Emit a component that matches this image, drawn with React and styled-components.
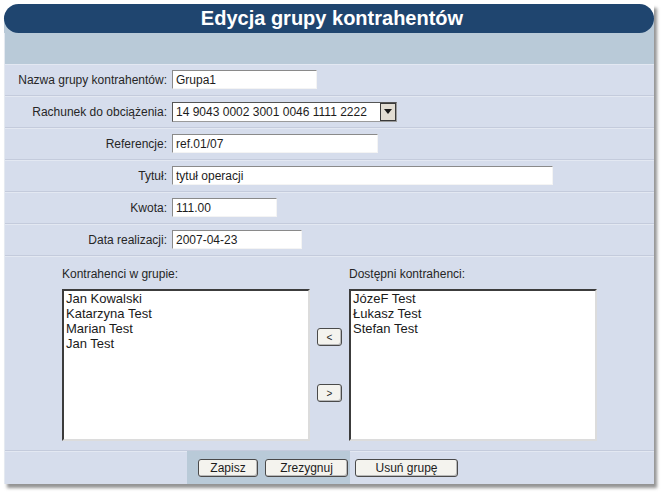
import styled, { createGlobalStyle } from 'styled-components'

const GlobalStyle = createGlobalStyle`
  html, body {
    margin: 0;
    padding: 0;
    background: #ffffff;
  }
  body {
    font-family: "Liberation Sans", Arial, sans-serif;
    font-size: 12px;
    color: #1c1c1c;
  }
`

const fields = [
  { label: 'Nazwa grupy kontrahentów:', value: 'Grupa1', width: 145 },
  { label: 'Rachunek do obciążenia:', value: '14 9043 0002 3001 0046 1111 2222', width: 225, select: true },
  { label: 'Referencje:', value: 'ref.01/07', width: 206 },
  { label: 'Tytuł:', value: 'tytuł operacji', width: 381 },
  { label: 'Kwota:', value: '111.00', width: 105 },
  { label: 'Data realizacji:', value: '2007-04-23', width: 130 },
]

const inGroup = ['Jan Kowalski', 'Katarzyna Test', 'Marian Test', 'Jan Test']
const available = ['JózeF Test', 'Łukasz Test', 'Stefan Test']

const App = () => {
  return (
    <>
      <GlobalStyle />
      <Page>
        <Panel>
          <Header>
            <TitleBar>
              <Title>Edycja grupy kontrahentów</Title>
            </TitleBar>
          </Header>
          <Band />
          {fields.map((f) => (
            <FormRow key={f.label}>
              <Label>{f.label}</Label>
              {f.select ? (
                <SelectBox $width={f.width}>
                  <SelectText>{f.value}</SelectText>
                  <ArrowButton>
                    <svg width="8" height="5" viewBox="0 0 8 5">
                      <path d="M0 0 L8 0 L4 5 Z" fill="#1a1a1a" />
                    </svg>
                  </ArrowButton>
                </SelectBox>
              ) : (
                <TextInput $width={f.width} defaultValue={f.value} />
              )}
            </FormRow>
          ))}
          <ListsSection>
            <ListColumn>
              <ListLabel>Kontrahenci w grupie:</ListLabel>
              <ListBox>
                {inGroup.map((n) => (
                  <ListItem key={n}>{n}</ListItem>
                ))}
              </ListBox>
            </ListColumn>
            <MoveColumn>
              <SmallButton>&lt;</SmallButton>
              <SmallButton>&gt;</SmallButton>
            </MoveColumn>
            <ListColumn>
              <ListLabel>Dostępni kontrahenci:</ListLabel>
              <ListBox>
                {available.map((n) => (
                  <ListItem key={n}>{n}</ListItem>
                ))}
              </ListBox>
            </ListColumn>
          </ListsSection>
          <ButtonBar>
            <ButtonCell>
              <Button $width={60}>Zapisz</Button>
              <Button $width={83}>Zrezygnuj</Button>
            </ButtonCell>
            <Button $width={103}>Usuń grupę</Button>
          </ButtonBar>
        </Panel>
      </Page>
    </>
  )
}

const Page = styled.div`
  width: 666px;
  height: 498px;
  padding: 4px 0 0 4px;
  box-sizing: border-box;
`

const Panel = styled.div`
  width: 650px;
  height: 480px;
  background: #d6ddec;
  border-left: 1px solid #e4e9f0;
  box-sizing: border-box;
  box-shadow: 3px 4px 3px rgba(60, 60, 60, 0.55);
  display: flex;
  flex-direction: column;
`

const Header = styled.div`
  background: linear-gradient(to bottom, #ffffff 50%, #b9cad8 50%);
  margin-left: -1px;
`

const TitleBar = styled.div`
  height: 29px;
  background: #1f456f;
  border-radius: 15px;
  display: flex;
  align-items: center;
  justify-content: center;
`

const Title = styled.span`
  font-family: "Liberation Sans Narrow", "Arial Narrow", "Liberation Sans", sans-serif;
  font-weight: bold;
  font-size: 20px;
  color: #ffffff;
  margin-left: 6px;
`

const Band = styled.div`
  height: 31px;
  background: #b9cad8;
`

const FormRow = styled.div`
  height: 32px;
  display: flex;
  align-items: center;
  border-bottom: 1px solid #c4cbdc;
  box-shadow: inset 0 1px 0 #e3e8f2;
  box-sizing: border-box;
`

const Label = styled.div`
  width: 162px;
  padding-right: 5px;
  text-align: right;
  flex-shrink: 0;
  color: #262626;
`

const TextInput = styled.input`
  width: ${(p) => p.$width}px;
  height: 19px;
  box-sizing: border-box;
  border: 1px solid;
  border-color: #8a8a8a #f4f4f4 #f4f4f4 #8a8a8a;
  background: #ffffff;
  font-family: "Liberation Sans", Arial, sans-serif;
  font-size: 12px;
  color: #1c1c1c;
  padding: 0 3px;
  margin: 0;
  outline: none;
`

const SelectBox = styled.div`
  width: ${(p) => p.$width}px;
  height: 20px;
  box-sizing: border-box;
  border: 1px solid;
  border-color: #555555 #9a9a9a #9a9a9a #555555;
  background: #ffffff;
  display: flex;
  align-items: center;
  justify-content: space-between;
  padding-left: 3px;
`

const SelectText = styled.span`
  font-size: 12px;
  white-space: nowrap;
`

const ArrowButton = styled.span`
  width: 16px;
  height: 18px;
  background: #e2ddd3;
  border: 1px solid #3a3a3a;
  box-sizing: border-box;
  display: flex;
  align-items: center;
  justify-content: center;
`

const ListsSection = styled.div`
  height: 195px;
  display: flex;
  padding-left: 57px;
  padding-top: 10px;
  box-sizing: border-box;
  border-bottom: 1px solid #c4cbdc;
  box-shadow: inset 0 1px 0 #e3e8f2;
`

const ListColumn = styled.div`
  display: flex;
  flex-direction: column;
`

const ListLabel = styled.div`
  height: 16px;
  line-height: 16px;
  margin-bottom: 7px;
  color: #262626;
`

const ListBox = styled.div`
  width: 248px;
  height: 152px;
  box-sizing: border-box;
  background: #ffffff;
  border: 2px solid;
  border-color: #3c3c3c #dcdcdc #dcdcdc #3c3c3c;
  padding: 0 2px;
`

const ListItem = styled.div`
  font-size: 13px;
  line-height: 15px;
  color: #1a1a1a;
`

const MoveColumn = styled.div`
  width: 39px;
  display: flex;
  flex-direction: column;
  align-items: center;
  padding-top: 62px;
  gap: 38px;
`

const buttonBase = `
  height: 18px;
  box-sizing: border-box;
  background: #f4f3ee;
  border: 1px solid #4a4a4a;
  border-radius: 3px;
  box-shadow: inset -1px -1px 0 #b9b9b9;
  font-family: "Liberation Sans", Arial, sans-serif;
  font-size: 12px;
  color: #1c1c1c;
  padding: 0;
  display: flex;
  align-items: center;
  justify-content: center;
`

const SmallButton = styled.button`
  ${buttonBase}
  width: 25px;
  font-size: 10px;
`

const ButtonBar = styled.div`
  flex: 1;
  display: flex;
  align-items: stretch;
  padding-left: 182px;
  box-shadow: inset 0 1px 0 #e3e8f2;
`

const ButtonCell = styled.div`
  width: 163px;
  background: #b9cad8;
  display: flex;
  align-items: center;
  gap: 7px;
  padding-left: 11px;
  box-sizing: border-box;
  margin-right: 5px;
`

const Button = styled.button`
  ${buttonBase}
  width: ${(p) => p.$width}px;
  align-self: center;
`

export default App
